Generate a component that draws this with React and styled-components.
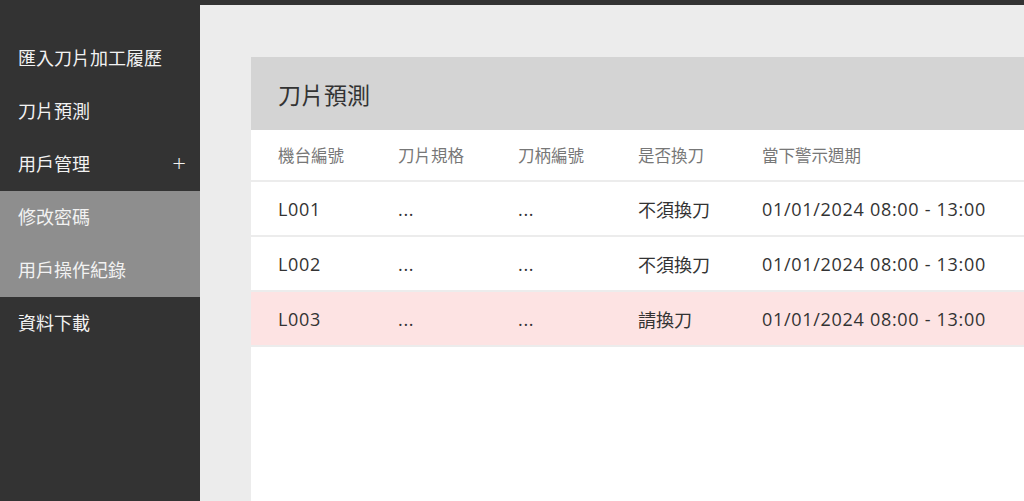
import React from 'react';
import styled, {createGlobalStyle} from 'styled-components';

const GlobalStyle = createGlobalStyle`
  html, body {
    margin: 0;
    padding: 0;
    height: 100%;
    background: #333333;
  }
  #root {
    height: 100%;
  }
  * {
    box-sizing: border-box;
  }
`;

const Layout = styled.div`
  display: flex;
  height: 501px;
  width: 1024px;
  overflow: hidden;
  font-family: 'Open Sans', 'Noto Sans CJK TC', sans-serif;
`;

const Sidebar = styled.nav`
  display: flex;
  flex-direction: column;
  width: 200px;
  flex-shrink: 0;
  padding-top: 32px;
  background: #333333;
`;

const NavItem = styled.div`
  display: flex;
  align-items: center;
  justify-content: space-between;
  height: 53px;
  padding: 0 14px 3px 18px;
  color: #f2f2f2;
  font-size: 18px;
  background: ${p => (p.$active ? '#8e8e8e' : 'transparent')};
`;

const Plus = styled.span`
  font-size: 24px;
  font-weight: 300;
  line-height: 1;
`;

const Main = styled.main`
  flex: 1;
  margin-top: 5px;
  padding: 52px 0 0 51px;
  background: #ececec;
  overflow: hidden;
`;

const Card = styled.section`
  width: 900px;
  height: 100%;
  background: #ffffff;
`;

const CardHeader = styled.div`
  display: flex;
  align-items: center;
  height: 73px;
  padding-left: 27px;
  background: #d4d4d4;
  color: #333333;
  font-size: 23px;
`;

const Row = styled.div`
  display: grid;
  grid-template-columns: 120px 120px 120px 124px auto;
  align-items: center;
  height: ${p => (p.$head ? '52px' : '55px')};
  padding-left: 27px;
  border-bottom: 2px solid #ececec;
  background: ${p => (p.$alert ? '#fde3e3' : '#ffffff')};
  color: ${p => (p.$head ? '#777777' : '#333333')};
  font-size: ${p => (p.$head ? '16.5px' : '18px')};
`;

const Cell = styled.span`
  letter-spacing: ${p => (p.$latin ? '0.7px' : '0')};
`;

const menu = [
  {label: '匯入刀片加工履歷'},
  {label: '刀片預測'},
  {label: '用戶管理', expand: true},
  {label: '修改密碼', active: true},
  {label: '用戶操作紀錄', active: true},
  {label: '資料下載'},
];

const rows = [
  {id: 'L001', spec: '...', holder: '...', change: '不須換刀', period: '01/01/2024 08:00 - 13:00'},
  {id: 'L002', spec: '...', holder: '...', change: '不須換刀', period: '01/01/2024 08:00 - 13:00'},
  {id: 'L003', spec: '...', holder: '...', change: '請換刀', period: '01/01/2024 08:00 - 13:00', alert: true},
];

export default function App() {
  return (
    <Layout>
      <GlobalStyle/>
      <Sidebar>
        {menu.map(m => (
          <NavItem key={m.label} $active={m.active}>
            <span>{m.label}</span>
            {m.expand && <Plus>+</Plus>}
          </NavItem>
        ))}
      </Sidebar>
      <Main>
        <Card>
          <CardHeader>刀片預測</CardHeader>
          <Row $head>
            <Cell>機台編號</Cell>
            <Cell>刀片規格</Cell>
            <Cell>刀柄編號</Cell>
            <Cell>是否換刀</Cell>
            <Cell>當下警示週期</Cell>
          </Row>
          {rows.map(r => (
            <Row key={r.id} $alert={r.alert}>
              <Cell $latin>{r.id}</Cell>
              <Cell $latin>{r.spec}</Cell>
              <Cell $latin>{r.holder}</Cell>
              <Cell>{r.change}</Cell>
              <Cell $latin>{r.period}</Cell>
            </Row>
          ))}
        </Card>
      </Main>
    </Layout>
  );
}
